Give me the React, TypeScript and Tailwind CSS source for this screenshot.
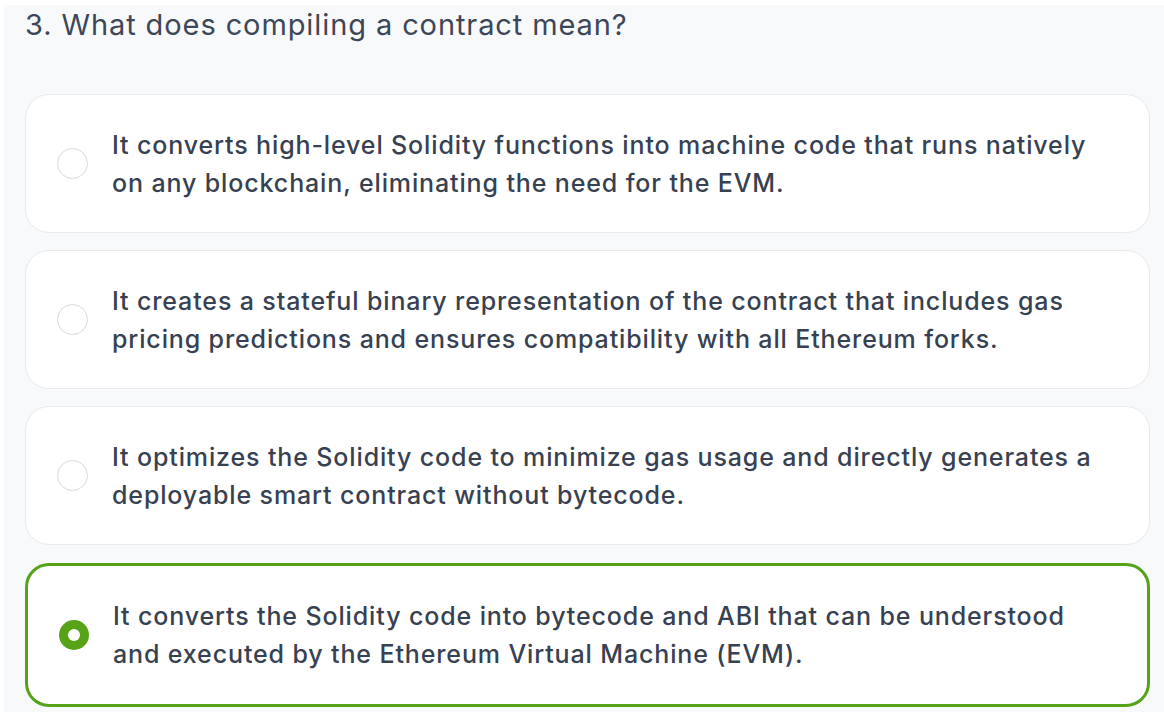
import { useState } from 'react';

const options = [
  'It converts high-level Solidity functions into machine code that runs natively on any blockchain, eliminating the need for the EVM.',
  'It creates a stateful binary representation of the contract that includes gas pricing predictions and ensures compatibility with all Ethereum forks.',
  'It optimizes the Solidity code to minimize gas usage and directly generates a deployable smart contract without bytecode.',
  'It converts the Solidity code into bytecode and ABI that can be understood and executed by the Ethereum Virtual Machine (EVM).',
];

export default function App() {
  const [selected, setSelected] = useState(3);

  return (
    <div className="min-h-screen bg-white pt-[5px] pl-[4px] font-['Inter',sans-serif]">
      <div className="min-h-[707px] bg-[#f8f9fb] pl-[21px] pr-[14px] pt-0">
        {/* Question */}
        <h2 className="text-[29px] leading-[40px] tracking-[0.9px] text-[#3d4757] font-normal">
          3. What does compiling a contract mean?
        </h2>

        {/* Options */}
        <div className="mt-[49px] flex flex-col gap-[17px]">
          {options.map((text, i) => {
            const active = selected === i;
            return (
              <button
                key={i}
                onClick={() => setSelected(i)}
                className={
                  active
                    ? 'flex items-center text-left bg-white rounded-[24px] border-[3px] border-[#56a318] pl-[31px] pr-[40px] py-[31px] mt-[1px]'
                    : 'flex items-center text-left bg-white rounded-[24px] border border-[#e8eaee] pl-[31px] pr-[40px] py-[30.5px]'
                }
              >
                {active ? (
                  <span className="flex h-[30px] w-[30px] shrink-0 items-center justify-center rounded-full bg-[#56a318]">
                    <span className="h-[12px] w-[12px] rounded-full bg-white" />
                  </span>
                ) : (
                  <span className="h-[31px] w-[31px] shrink-0 rounded-full border border-[#d5d9e0] bg-white" />
                )}
                <span className="ml-[24px] text-[25px] leading-[38px] tracking-[0.87px] font-medium text-[#374151]">
                  {text}
                </span>
              </button>
            );
          })}
        </div>
      </div>
    </div>
  );
}
